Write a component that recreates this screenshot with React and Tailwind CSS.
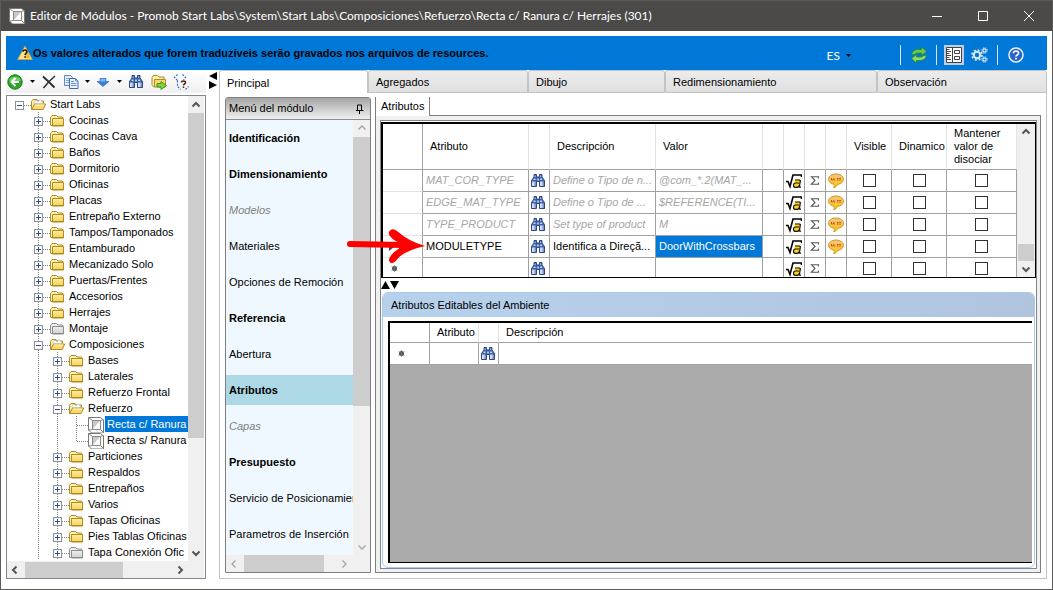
import { useState } from 'react';
import clsx from 'clsx';

const TREE = [
  { depth: 0, label: 'Start Labs', icon: 'open', box: '-' },
  { depth: 1, label: 'Cocinas', icon: 'folder', box: '+' },
  { depth: 1, label: 'Cocinas Cava', icon: 'folder', box: '+' },
  { depth: 1, label: 'Baños', icon: 'folder', box: '+' },
  { depth: 1, label: 'Dormitorio', icon: 'folder', box: '+' },
  { depth: 1, label: 'Oficinas', icon: 'folder', box: '+' },
  { depth: 1, label: 'Placas', icon: 'folder', box: '+' },
  { depth: 1, label: 'Entrepaño Externo', icon: 'folder', box: '+' },
  { depth: 1, label: 'Tampos/Tamponados', icon: 'folder', box: '+' },
  { depth: 1, label: 'Entamburado', icon: 'folder', box: '+' },
  { depth: 1, label: 'Mecanizado Solo', icon: 'folder', box: '+' },
  { depth: 1, label: 'Puertas/Frentes', icon: 'folder', box: '+' },
  { depth: 1, label: 'Accesorios', icon: 'folder', box: '+' },
  { depth: 1, label: 'Herrajes', icon: 'folder', box: '+' },
  { depth: 1, label: 'Montaje', icon: 'gray', box: '+' },
  { depth: 1, label: 'Composiciones', icon: 'open', box: '-' },
  { depth: 2, label: 'Bases', icon: 'folder', box: '+' },
  { depth: 2, label: 'Laterales', icon: 'folder', box: '+' },
  { depth: 2, label: 'Refuerzo Frontal', icon: 'folder', box: '+' },
  { depth: 2, label: 'Refuerzo', icon: 'open', box: '-' },
  { depth: 3, label: 'Recta c/ Ranura', icon: 'module' },
  { depth: 3, label: 'Recta s/ Ranura', icon: 'module', last: true },
  { depth: 2, label: 'Particiones', icon: 'folder', box: '+' },
  { depth: 2, label: 'Respaldos', icon: 'folder', box: '+' },
  { depth: 2, label: 'Entrepaños', icon: 'folder', box: '+' },
  { depth: 2, label: 'Varios', icon: 'folder', box: '+' },
  { depth: 2, label: 'Tapas Oficinas', icon: 'folder', box: '+' },
  { depth: 2, label: 'Pies Tablas Oficinas', icon: 'folder', box: '+' },
  { depth: 2, label: 'Tapa Conexión Ofic', icon: 'gray', box: '+' },
];

const MENU = [
  { label: 'Identificación', kind: 'bold' },
  { label: 'Dimensionamiento', kind: 'bold' },
  { label: 'Modelos', kind: 'off' },
  { label: 'Materiales' },
  { label: 'Opciones de Remoción' },
  { label: 'Referencia', kind: 'bold' },
  { label: 'Abertura' },
  { label: 'Atributos', kind: 'bold' },
  { label: 'Capas', kind: 'off' },
  { label: 'Presupuesto', kind: 'bold' },
  { label: 'Servicio de Posicionamiento' },
  { label: 'Parametros de Inserción' },
];

const ROWS = [
  { name: 'MAT_COR_TYPE', desc: 'Define o Tipo de n...', value: '@com_*.2(MAT_...', inherited: true },
  { name: 'EDGE_MAT_TYPE', desc: 'Define o Tipo de ...', value: '$REFERENCE(TI...', inherited: true },
  { name: 'TYPE_PRODUCT', desc: 'Set type of product', value: 'M', inherited: true },
  { name: 'MODULETYPE', desc: 'Identifica a Direçã...', value: 'DoorWithCrossbars', current: true },
  { name: '', desc: '', value: '', fresh: true },
];

const TABS = [
  { label: 'Principal', width: 'w-[149px]' },
  { label: 'Agregados', width: 'w-[160px]' },
  { label: 'Dibujo', width: 'w-[137px]' },
  { label: 'Redimensionamiento', width: 'w-[212px]' },
  { label: 'Observación', width: 'flex-1' },
];

/* ---------- icons ---------- */

function ModuleIcon({ className }) {
  return (
    <svg viewBox="0 0 16 16" className={clsx('h-4 w-4 shrink-0', className)}>
      <path d="M.5.5h12l3 2.500v13H3.500L.5 13z" fill="#fff" stroke="#777" />
      <path d="M4.500 3.500h8v9h-8z" fill="#fff" stroke="#888" />
      <path d="M5 12V4h7z" fill="#c9c9c9" />
      <path d="M.5.5l4 3M15.500 2.500l-3 1M.5 13l4-.5M15.500 15.500l-3-3" stroke="#888" fill="none" />
    </svg>
  );
}

function FolderIcon({ kind }) {
  const gray = kind === 'gray';
  const edge = gray ? '#8d8d8d' : '#b08a1c';
  if (kind === 'open') {
    return (
      <svg viewBox="0 0 16 16" className="h-4 w-4 shrink-0">
        <path d="M.5 13.500v-8l1.500-2h4l1 1.500h5.500v2" fill="#fdf0b0" stroke={edge} />
        <path d="M3 6.500 5 4l2 2 2-2.500 3 3.500v3H4z" fill="#fff" stroke="#a9bdd6" strokeWidth=".8" />
        <path d="M.8 13.500 3.500 8h11.200l-2.500 5.500z" fill="#f9da72" stroke={edge} />
        <path d="M3.800 9h9.400" stroke="#fff7cf" />
      </svg>
    );
  }
  return (
    <svg viewBox="0 0 16 16" className="h-4 w-4 shrink-0">
      <defs>
        <linearGradient id={gray ? 'face-gray' : 'face-gold'} x1="0" y1="0" x2="0" y2="1">
          <stop offset="0" stopColor={gray ? '#f2f2f2' : '#fff3b4'} />
          <stop offset="1" stopColor={gray ? '#cfcfcf' : '#f8cf55'} />
        </linearGradient>
      </defs>
      <path d="M.5 13V5.500L2 3.500h4.500L8 5h4.500l.5 1.500" fill={gray ? '#eee' : '#fdf0b0'} stroke={edge} />
      <path d="M.5 13.500V5.500M2.500 6.500h11v7.500h-11z" fill={gray ? 'url(#face-gray)' : 'url(#face-gold)'} stroke={edge} />
      <path d="M.8 13.500h13" stroke={edge} />
    </svg>
  );
}

function BinocularsIcon() {
  return (
    <svg viewBox="0 0 16 16" className="ml-px block h-4 w-4 shrink-0">
      <path d="M4 1.500h2.500V4h3V1.500H12V4l2.500 3.500v6h-5V8.500h-3v5h-5v-6L4 4z" fill="#3f62a8" stroke="#1f3a7c" strokeWidth=".9" />
      <path d="M2.200 8.500h1.600v4.500H2.200zM10.200 8.500h1.600v4.500h-1.600z" fill="#fff" />
      <path d="M3.800 8.500h1.800v4.500H3.800zM11.800 8.500h1.800v4.500h-1.800z" fill="#9db8e6" />
      <path d="M4.600 2.500h1v1.500h-1zM10.200 2.500h1v1.500h-1zM3.500 5.500h2v1.500h-2zM10.200 5.500h2v1.500h-2z" fill="#c6d6f4" />
      <path d="M7 5.500h2v2H7z" fill="#a8c0ea" />
    </svg>
  );
}

function FormulaIcon() {
  return (
    <svg viewBox="0 0 16 16" className="mx-auto block h-4 w-4">
      <path d="M0 8.500h2l2 5 3-11.500h8.500v2" fill="none" stroke="#000" strokeWidth="1.600" />
      <path d="M9 6.500h5.500l-1 8H8l-.5-3 1-2.500z" fill="#ffcf1e" />
      <path d="M9 7h4.500q1 0 .8 1.200L13.300 14.200M13 10H9.200q-1.700.2-1.700 2.300 0 2 1.700 2H11q2 0 2.300-2M13.300 14.200H15" fill="none" stroke="#111" strokeWidth="1.200" />
    </svg>
  );
}

function SigmaIcon() {
  return (
    <svg viewBox="0 0 16 16" className="mx-auto block h-4 w-4">
      <path d="M11.500 5.500V3.700H4.500L8 7.500l-3.700 3.800h7.200V9.500" fill="none" stroke="#555" strokeWidth="1.100" />
    </svg>
  );
}

function BubbleIcon() {
  return (
    <svg viewBox="0 0 16 16" className="mx-auto block h-4 w-4">
      <defs>
        <linearGradient id="bubble" x1="0" y1="0" x2="0" y2="1">
          <stop offset="0" stopColor="#f3c585" />
          <stop offset="1" stopColor="#ffc400" />
        </linearGradient>
      </defs>
      <path d="M8 1C3.500 1 .5 3.300.5 6.300c0 2.500 2.300 4.400 5.500 5 .5 1.400.3 2.400-.3 3.400 2-.6 3.300-1.800 4-3.300 3.400-.5 5.800-2.500 5.800-5.100C15.500 3.300 12.500 1 8 1z" fill="url(#bubble)" stroke="#c98d1b" strokeWidth=".9" />
      <path d="M3.500 5v2h1.300M5.800 5v2h1.300M9 5.500h1.500M9 7h1.500M11.300 5.500h1.500M11.300 7h1.500" stroke="#b5501a" fill="none" />
    </svg>
  );
}

function WarningIcon() {
  return (
    <svg viewBox="0 0 16 16" className="h-4 w-4 shrink-0">
      <path d="M8 1.200 15.300 14.500H.7z" fill="#ffe68a" stroke="#c9a55a" strokeLinejoin="round" />
      <path d="M8 2.800 13.500 13.300H8z" fill="#f2b92a" />
      <path d="M6 6.700Q6 5 8 5t2 1.800q0 1-1 1.600T8 10M8 11.300v1.500" fill="none" stroke="#222" strokeWidth="1.600" />
    </svg>
  );
}

function BackIcon() {
  return (
    <svg viewBox="0 0 16 16" className="h-4 w-4">
      <circle cx="8" cy="8" r="7.200" fill="#2fa62b" stroke="#1e7d1c" />
      <path d="M2 6.500a6.200 5 0 0 1 12 0q-6 2-12 0z" fill="#6fd062" />
      <path d="M8.500 4 4.500 8l4 4M5 8h7" fill="none" stroke="#fff" strokeWidth="2" />
    </svg>
  );
}

function DeleteIcon() {
  return (
    <svg viewBox="0 0 16 16" className="h-4 w-4">
      <path d="M2 2.500q5 4.500 11.500 11" fill="none" stroke="#333" strokeWidth="2" />
      <path d="M14 2Q8 7 2.500 14" fill="none" stroke="#333" strokeWidth="1.600" />
    </svg>
  );
}

function CopyIcon() {
  return (
    <svg viewBox="0 0 16 16" className="h-4 w-4">
      <path d="M1.500 1.500h6l2 2v8h-8z" fill="#e4efff" stroke="#5b83c4" />
      <path d="M3 4.500h4M3 6.500h3M3 8.500h3" stroke="#7ea1d8" />
      <path d="M6.500 4.500h6l2.500 2.500v7.500H6.500z" fill="#eef5ff" stroke="#3f6bb5" />
      <path d="M12.500 4.500V7H15M8 7.500h3M8 9.500h5.500M8 11.500h5.500" fill="none" stroke="#5f8cd0" />
    </svg>
  );
}

function DownIcon() {
  return (
    <svg viewBox="0 0 16 16" className="h-4 w-4">
      <path d="M5 4.500h6v3h3l-6 5-6-5h3z" fill="#3b7fe0" stroke="#2a64bd" strokeWidth=".6" />
      <path d="M5.500 5h5v2.500h-5z" fill="#84b3f3" />
    </svg>
  );
}

function FolderGoIcon() {
  return (
    <svg viewBox="0 0 16 16" className="h-4 w-4">
      <path d="M1 11.500V3.500L2.500 1.500h4L8 3h5v2" fill="#fdf0b0" stroke="#b08a1c" />
      <path d="M3.500 5.500h11v7.500h-11z" fill="#f9da72" stroke="#b08a1c" />
      <path d="M1 11.500 3.500 13" stroke="#b08a1c" />
      <path d="M6 9.500h4V7.500l5.500 4-5.500 4v-2.500H6z" fill="#7ed43c" stroke="#3d8a16" strokeWidth=".9" />
    </svg>
  );
}

function StructureIcon() {
  return (
    <svg viewBox="0 0 17 16" className="h-4 w-[17px]">
      <path d="M4.500.5 1.500 3.500l3 3M9.500.5l3 3-2 2.500M4.500 6.500v6l3 3M12.500 15.500l3-3" fill="none" stroke="#3873c9" strokeWidth="1.200" strokeDasharray="2 1.200" />
      <path d="M8.500 8.500q0-1.500 2-1.500t2 1.500q0 1-1 1.500t-1 1.500M10.500 12.500v1.500" fill="none" stroke="#4a2a10" strokeWidth="1.500" />
    </svg>
  );
}

function RefreshIcon() {
  return (
    <svg viewBox="0 0 18 18" className="h-[18px] w-[18px]">
      <path d="M1.500 8.500Q3 3.500 8 3.500h3.500V1l5 4.500-5 4V7H8Q5 7 4.500 8.500z" fill="#6ccb4c" stroke="#2c8a22" strokeWidth=".8" />
      <path d="M16.500 9.500q-1.500 5-6.500 5H6.500V17l-5-4.500 5-4V11H10q3 0 3.500-1.500z" fill="#8bdc60" stroke="#2c8a22" strokeWidth=".8" />
    </svg>
  );
}

function LayoutIcon() {
  return (
    <svg viewBox="0 0 16 16" className="h-4 w-4">
      <path d="M.5.5h15v15H.5z" fill="#fff" stroke="#444" />
      <path d="M6.500 1v14M1 2.500h2.500M1 4.500h4M1 6.500h2.500M1 8.500h4M1 10.500h2.500M1 12.500h4" stroke="#444" />
      <path d="M8.500 3.500h5v3h-5zM8.500 9.500h5v3h-5z" fill="#fff" stroke="#444" />
    </svg>
  );
}

function GearsIcon() {
  return (
    <svg viewBox="0 0 17 16" className="h-4 w-[17px]" fill="none" stroke="#dfeaf5">
      <circle cx="6" cy="8" r="3.200" strokeWidth="2" />
      <circle cx="6" cy="8" r="5" strokeWidth="1.600" strokeDasharray="2 1.930" />
      <circle cx="13.500" cy="3.500" r="1.600" strokeWidth="1.200" />
      <circle cx="13.500" cy="3.500" r="2.700" strokeDasharray="1.200 .92" />
      <circle cx="13.500" cy="12.500" r="1.600" strokeWidth="1.200" />
      <circle cx="13.500" cy="12.500" r="2.700" strokeDasharray="1.200 .92" />
    </svg>
  );
}

function HelpIcon() {
  return (
    <svg viewBox="0 0 16 16" className="h-4 w-4">
      <circle cx="8" cy="8" r="7" fill="#2a62c9" stroke="#e9f1fb" strokeWidth="1.500" />
      <path d="M5.500 6.300Q5.500 4 8 4t2.500 2q0 1.200-1.300 1.900T8 9.600M8 10.800v1.700" fill="none" stroke="#fff" strokeWidth="1.700" />
    </svg>
  );
}

function Caret() {
  return (
    <svg viewBox="0 0 5 3" className="h-[3px] w-[5px] shrink-0">
      <path d="M0 0h5L2.500 3z" fill="#000" />
    </svg>
  );
}

const CHEVRONS = {
  up: 'M4.500 9.500 8 6l3.500 3.500',
  down: 'M4.500 6.500 8 10l3.500-3.500',
  left: 'M9.500 4.500 6 8l3.500 3.500',
  right: 'M6.500 4.500 10 8l-3.500 3.500',
};

function ScrollButton({ dir, soft }) {
  return (
    <button type="button" aria-label={dir} className="flex h-4 w-4 shrink-0 items-center justify-center">
      <svg viewBox="0 0 16 16" className="h-4 w-4">
        <path d={CHEVRONS[dir]} fill="none" stroke={soft ? '#a3a3a3' : '#555'} strokeWidth={soft ? 1.3 : 2} />
      </svg>
    </button>
  );
}

/* ---------- title bar + blue bar ---------- */

function TitleBar() {
  return (
    <header className="flex h-[30px] shrink-0 items-center bg-[#4c4a48] pl-2 text-white">
      <ModuleIcon />
      <h1 className="ml-[5px] font-[Lato,sans-serif] text-[12px] leading-4 whitespace-nowrap">
        Editor de Módulos - Promob Start Labs\System\Start Labs\Composiciones\Refuerzo\Recta c/ Ranura c/ Herrajes (301)
      </h1>
      <div className="ml-auto flex">
        <button type="button" aria-label="Minimizar" className="flex h-7 w-[46px] items-center justify-center">
          <svg viewBox="0 0 10 10" className="h-[10px] w-[10px]"><path d="M0 5.500h10" stroke="#fff" /></svg>
        </button>
        <button type="button" aria-label="Maximizar" className="flex h-7 w-[46px] items-center justify-center">
          <svg viewBox="0 0 10 10" className="h-[10px] w-[10px]"><path d="M.5.5h9v9h-9z" fill="none" stroke="#fff" /></svg>
        </button>
        <button type="button" aria-label="Cerrar" className="flex h-7 w-[46px] items-center justify-center">
          <svg viewBox="0 0 10 10" className="h-[10px] w-[10px]"><path d="m0 0 10 10M10 0 0 10" stroke="#fff" /></svg>
        </button>
      </div>
    </header>
  );
}

function NoticeBar() {
  return (
    <div className="flex h-[34px] shrink-0 items-center bg-[#0078d7] pl-[11px]">
      <WarningIcon />
      <p className="text-[11px] font-bold whitespace-nowrap">
        Os valores alterados que forem traduzíveis serão gravados nos arquivos de resources.
      </p>
      <div className="ml-auto flex items-center pt-1 pr-[23px]">
        <button type="button" className="flex items-center gap-[6px] font-[Lato,sans-serif] text-[12px] text-white">
          ES <Caret />
        </button>
        <span className="ml-[49px] h-5 w-px bg-[#d8e6f4]" />
        <button type="button" aria-label="Actualizar" className="mr-2 ml-[9px]"><RefreshIcon /></button>
        <span className="h-5 w-px bg-[#d8e6f4]" />
        <button type="button" aria-label="Atributos" className="ml-[7px] flex h-5 w-5 items-center justify-center bg-[#bccfe4]">
          <LayoutIcon />
        </button>
        <button type="button" aria-label="Configuración" className="ml-[7px]"><GearsIcon /></button>
        <span className="ml-[9px] h-5 w-px bg-[#d8e6f4]" />
        <button type="button" aria-label="Ayuda" className="ml-[10px]"><HelpIcon /></button>
      </div>
    </div>
  );
}

/* ---------- tree ---------- */

function Guide({ own, node }) {
  const dots = { stroke: '#808080', strokeDasharray: '1 1', fill: 'none' };
  if (!own) {
    return (
      <svg viewBox="0 0 19 16" className="h-4 w-[19px] shrink-0">
        <path d="M9.500 0v16" {...dots} />
      </svg>
    );
  }
  return (
    <svg viewBox="0 0 21 16" className="h-4 w-[21px] shrink-0">
      {node.depth > 0 && <path d={node.last ? 'M9.500 0v9' : 'M9.500 0v16'} {...dots} />}
      <path d="M10 9.500h11" {...dots} />
      {node.box && <rect x="5.500" y="5.500" width="8" height="8" fill="#fcfcfc" stroke="#919191" />}
      {node.box && <path d={node.box === '+' ? 'M7 9.500h5M9.500 7v5' : 'M7 9.500h5'} stroke="#2a4aa8" />}
    </svg>
  );
}

function TreeRow({ node, selected, onSelect }) {
  return (
    <li className="flex h-4">
      {Array.from({ length: node.depth }, (_, i) =>
        i === 0 ? <span key={i} className="w-[19px] shrink-0" /> : <Guide key={i} />
      )}
      <Guide own node={node} />
      {node.icon === 'module' ? <ModuleIcon className="mt-px" /> : <FolderIcon kind={node.icon} />}
      <button
        type="button"
        onClick={onSelect}
        className={clsx(
          'ml-px h-4 min-w-0 flex-1 pl-[2px] text-left leading-4 whitespace-nowrap',
          selected && 'bg-[#0078d7] text-white'
        )}
      >
        {node.label}
      </button>
    </li>
  );
}

function Sidebar() {
  const [selected, setSelected] = useState(20);

  return (
    <aside className="flex w-[200px] shrink-0 flex-col">
      <div className="flex h-[23px] shrink-0 items-center bg-gradient-to-b from-white to-[#f0f0f0] pl-px">
        <button type="button" aria-label="Atrás" className="flex items-center gap-[7px]"><BackIcon /><Caret /></button>
        <button type="button" aria-label="Eliminar" className="ml-[6px]"><DeleteIcon /></button>
        <button type="button" aria-label="Copiar" className="ml-[6px] flex items-center gap-[6px]"><CopyIcon /><Caret /></button>
        <button type="button" aria-label="Bajar" className="ml-[5px] flex items-center gap-[6px]"><DownIcon /><Caret /></button>
        <button type="button" aria-label="Buscar" className="ml-[5px]"><BinocularsIcon /></button>
        <button type="button" aria-label="Mover" className="ml-[7px]"><FolderGoIcon /></button>
        <button type="button" aria-label="Estructura" className="ml-[6px]"><StructureIcon /></button>
      </div>
      <div className="mt-[2px] flex min-h-0 flex-1 flex-col border border-[#828790] pr-px">
        <div className="flex min-h-0 flex-1">
          <ul className="min-w-0 flex-1 overflow-hidden pl-[3px]">
            {TREE.map((node, i) => (
              <TreeRow key={i} node={node} selected={selected === i} onSelect={() => setSelected(i)} />
            ))}
          </ul>
          <div className="flex w-4 flex-col bg-[#f0f0f0] pt-px">
            <ScrollButton dir="up" />
            <div className="h-[325px] bg-[#cdcdcd]" />
            <div className="mt-auto"><ScrollButton dir="down" /></div>
          </div>
        </div>
        <div className="flex h-[17px] shrink-0 items-center bg-[#f0f0f0]">
          <ScrollButton dir="left" />
          <div className="ml-[2px] h-4 w-[98px] bg-[#cdcdcd]" />
          <div className="mr-4 ml-auto"><ScrollButton dir="right" /></div>
        </div>
      </div>
    </aside>
  );
}

/* ---------- module menu ---------- */

function ModuleMenu() {
  const [active, setActive] = useState('Atributos');

  return (
    <nav className="flex w-[146px] shrink-0 flex-col rounded-t-[3px] border border-[#7f7f7f]">
      <div className="flex h-[22px] shrink-0 items-center justify-between border-b border-[#8a8a8a] bg-gradient-to-b from-[#a6a6a6] to-[#f0f0f0] pr-[6px] pl-[3px]">
        <h2>Menú del módulo</h2>
        <button type="button" aria-label="Fijar">
          <svg viewBox="0 0 8 10" className="h-[10px] w-2">
            <path d="M1.500 6.500v-5.500h4v5.500M0 6.500h7.500M3.500 6.500v3.500" fill="none" stroke="#000" />
            <path d="M5 1h1v5.500H5z" />
          </svg>
        </button>
      </div>
      <div className="flex min-h-0 flex-1">
        <ul className="flex min-w-0 flex-1 flex-col gap-[6px] overflow-hidden bg-[#f0f8ff] pt-[3px]">
          {MENU.map((item) => (
            <li key={item.label}>
              <button
                type="button"
                onClick={() => setActive(item.label)}
                className={clsx(
                  'block h-[30px] w-full pl-[3px] text-left whitespace-nowrap',
                  item.kind === 'bold' && 'font-bold',
                  item.kind === 'off' && 'text-[#808080] italic',
                  active === item.label && 'bg-[#add8e6]'
                )}
              >
                {item.label}
              </button>
            </li>
          ))}
        </ul>
        <div className="flex w-[17px] flex-col items-center bg-[#f0f0f0]">
          <ScrollButton dir="up" soft />
          <div className="mt-px h-[269px] w-full bg-[#cdcdcd]" />
          <div className="mt-auto"><ScrollButton dir="down" soft /></div>
        </div>
      </div>
      <div className="flex h-[17px] shrink-0 items-center bg-[#f0f0f0]">
        <ScrollButton dir="left" soft />
        <div className="ml-[2px] h-[17px] w-20 bg-[#cdcdcd]" />
        <div className="mr-[18px] ml-auto"><ScrollButton dir="right" soft /></div>
      </div>
    </nav>
  );
}

/* ---------- grids ---------- */

const CELL = 'h-[22px] overflow-hidden border-r border-b border-[#a0a0a0] p-0 whitespace-nowrap';
const HEAD = 'h-[46px] border-r border-r-[#e3e3e3] border-b border-b-[#a0a0a0] p-0 pl-[7px] text-left font-normal';
const CHECKS = ['Visible', 'Dinamico', 'Mantener valor de disociar'];

function NewMark() {
  return (
    <svg viewBox="0 0 7 7" className="ml-2 h-[7px] w-[7px]">
      <circle cx="3.500" cy="3.500" r="2.500" fill="#444" />
      <path d="M3.500 0v7M.5 1.500l6 4M6.500 1.500l-6 4" stroke="#777" strokeWidth=".7" />
    </svg>
  );
}

function AttributeRow({ row }) {
  const text = row.inherited ? 'text-[#a6a6a6] italic' : '';
  return (
    <tr>
      <td className="h-[22px] border-r border-b border-r-[#a0a0a0] border-b-[#e3e3e3] p-0">
        {row.fresh && <NewMark />}
        {row.current && <svg viewBox="0 0 5 8" className="ml-[6px] h-2 w-[5px]"><path d="M0 0l5 4-5 4z" fill="#444" /></svg>}
      </td>
      <td className={clsx(CELL, 'pl-[3px]', text)}>{row.name}</td>
      <td className={CELL}><BinocularsIcon /></td>
      <td className={clsx(CELL, 'pl-[3px]', text)}>{row.desc}</td>
      <td className={clsx(CELL, 'pl-[3px]', text, row.current && 'bg-[#0078d7] text-white')}>{row.value}</td>
      <td className={CELL} />
      <td className={CELL}><FormulaIcon /></td>
      <td className={CELL}><SigmaIcon /></td>
      <td className={CELL}>{!row.fresh && <BubbleIcon />}</td>
      {CHECKS.map((name) => (
        <td key={name} className={CELL}>
          <input
            type="checkbox"
            aria-label={`${name} ${row.name}`}
            className="mx-auto block h-[13px] w-[13px] appearance-none border border-[#333] bg-white checked:bg-[#333]"
          />
        </td>
      ))}
    </tr>
  );
}

function AttributeGrid() {
  return (
    <div className="flex h-[156px] shrink-0 overflow-hidden border-2 border-r border-b border-black bg-white">
      <table className="h-px min-w-0 flex-1 table-fixed border-separate border-spacing-0">
        <colgroup>
          <col className="w-[40px]" />
          <col className="w-[106px]" />
          <col className="w-[21px]" />
          <col className="w-[106px]" />
          <col />
          <col className="w-[21px]" />
          <col className="w-[21px]" />
          <col className="w-[21px]" />
          <col className="w-[21px]" />
          <col className="w-[45px]" />
          <col className="w-[55px]" />
          <col className="w-[70px]" />
        </colgroup>
        <thead>
          <tr>
            <th className="border-r border-b border-[#a0a0a0]" />
            <th className={HEAD}>Atributo</th>
            <th className={HEAD} />
            <th className={HEAD}>Descripción</th>
            <th className={HEAD}>Valor</th>
            <th className={HEAD} />
            <th className={HEAD} />
            <th className={HEAD} />
            <th className={HEAD} />
            <th className={HEAD}>Visible</th>
            <th className={HEAD}>Dinamico</th>
            <th className={clsx(HEAD, 'leading-[13px]')}>Mantener valor de disociar</th>
          </tr>
        </thead>
        <tbody>
          {ROWS.map((row, i) => (
            <AttributeRow key={i} row={row} />
          ))}
        </tbody>
      </table>
      <div className="flex w-[18px] shrink-0 flex-col items-center bg-[#f0f0f0]">
        <ScrollButton dir="up" />
        <div className="mt-auto h-[17px] w-4 bg-[#cdcdcd]" />
        <ScrollButton dir="down" />
      </div>
    </div>
  );
}

function EnvironmentPanel() {
  return (
    <section className="mx-px flex min-h-0 flex-1 flex-col rounded-[6px] border border-[#a9c9ee] bg-white pb-1">
      <h2 className="flex h-6 shrink-0 items-center rounded-t-[5px] bg-gradient-to-r from-[#b7d1ec] to-[#b0c4de] pl-2">
        Atributos Editables del Ambiente
      </h2>
      <div className="mt-1 mr-[2px] ml-[5px] min-h-0 flex-1 overflow-hidden border-t-2 border-b border-l-2 border-black bg-[#ababab]">
        <table className="w-full table-fixed border-separate border-spacing-0 bg-white">
          <colgroup>
            <col className="w-[40px]" />
            <col className="w-[49px]" />
            <col className="w-[20px]" />
            <col />
          </colgroup>
          <thead>
            <tr>
              <th className="h-5 border-r border-b border-[#a0a0a0] p-0" />
              <th className="h-5 border-r border-b border-r-[#e3e3e3] border-b-[#a0a0a0] p-0 pl-[7px] text-left font-normal">Atributo</th>
              <th className="h-5 border-r border-b border-r-[#e3e3e3] border-b-[#a0a0a0] p-0" />
              <th className="h-5 border-b border-[#a0a0a0] p-0 pl-[7px] text-left font-normal">Descripción</th>
            </tr>
          </thead>
          <tbody>
            <tr>
              <td className={CELL}><NewMark /></td>
              <td className={CELL} />
              <td className={CELL}><BinocularsIcon /></td>
              <td className="border-b border-[#a0a0a0]" />
            </tr>
          </tbody>
        </table>
      </div>
    </section>
  );
}

function AttributesPage() {
  return (
    <div className="flex min-w-0 flex-1 flex-col">
      <div className="flex h-[19px] shrink-0">
        <button type="button" className="w-[55px] border-r border-l border-[#7f7f7f] bg-white pl-[5px] text-left">Atributos</button>
        <div className="flex-1 border-b border-[#7f7f7f]" />
      </div>
      <div className="flex min-h-0 flex-1 flex-col border-x border-b border-[#7f7f7f] bg-[#f0f0f0] pt-1 pr-[3px] pb-[3px] pl-1">
        <div className="flex min-h-0 flex-1 flex-col border border-[#828790] bg-white pt-px">
          <AttributeGrid />
          <div className="flex h-[14px] shrink-0 items-center">
            <button type="button" aria-label="Redimensionar" className="flex">
              <svg viewBox="0 0 18 8" className="h-2 w-[18px]">
                <path d="M0 8h9L4.500 0zM9 0h9l-4.500 8z" />
              </svg>
            </button>
          </div>
          <EnvironmentPanel />
        </div>
      </div>
    </div>
  );
}

export default function App() {
  const [tab, setTab] = useState('Principal');

  return (
    <div className="flex h-screen flex-col overflow-hidden border border-[#5d5b59] bg-white font-['Liberation_Sans',Arial,sans-serif] text-[11px] leading-[13px] text-black">
      <TitleBar />
      <main className="flex min-h-0 flex-1 flex-col px-[5px] pt-[5px] pb-[10px]">
        <NoticeBar />
        <div className="flex min-h-0 flex-1">
          <Sidebar />
          <div className="flex w-[13px] shrink-0 flex-col items-center pt-[2px]">
            <svg viewBox="0 0 8 18" className="h-[18px] w-2">
              <path d="M8 0v8L0 4zM0 9v8l8-4z" />
            </svg>
          </div>
          <div className="relative flex min-w-0 flex-1 flex-col">
            <div role="tablist" className="flex h-[23px] shrink-0">
              {TABS.map((t) => (
                <button
                  key={t.label}
                  type="button"
                  role="tab"
                  aria-selected={tab === t.label}
                  onClick={() => setTab(t.label)}
                  className={clsx(
                    'rounded-t-[3px] border-x border-t border-[#c3c3c3] pt-[2px] pl-[7px] text-left',
                    t.width,
                    tab === t.label ? 'bg-white' : 'border-b bg-gradient-to-b from-[#ececec] to-[#e0e0e0]'
                  )}
                >
                  {t.label}
                </button>
              ))}
            </div>
            <div className="flex min-h-0 flex-1 border-x border-b border-[#c3c3c3] p-[5px] pt-1">
              <ModuleMenu />
              <div className="w-1 shrink-0" />
              <AttributesPage />
            </div>
            <svg viewBox="0 0 80 36" className="pointer-events-none absolute top-[158px] left-[127px] h-9 w-20">
              <path d="M4 16 58 17" stroke="#f00" strokeWidth="6" strokeLinecap="round" fill="none" />
              <path d="M79 18Q62 13 51 3 47 0 44 2.500 41.500 5 44 8q3 4 9 6.500v6q-7 4-9.500 9.500-1.500 3.500 1.500 5 3 .8 5.500-3Q57 23 79 18z" fill="#f00" />
            </svg>
          </div>
        </div>
      </main>
    </div>
  );
}
